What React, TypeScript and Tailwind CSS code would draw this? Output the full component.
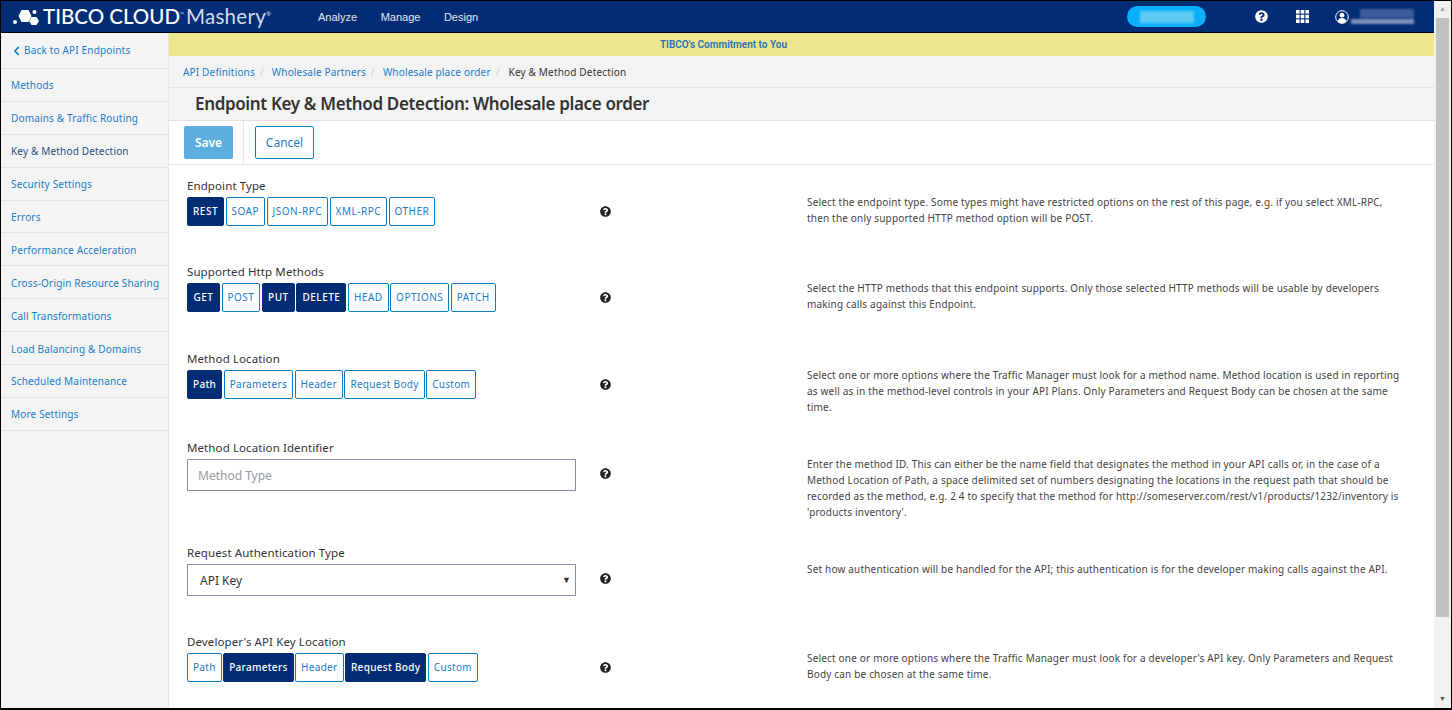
import { FaChevronLeft, FaQuestionCircle } from 'react-icons/fa';

const sideLinks = [
  'Methods',
  'Domains & Traffic Routing',
  'Key & Method Detection',
  'Security Settings',
  'Errors',
  'Performance Acceleration',
  'Cross-Origin Resource Sharing',
  'Call Transformations',
  'Load Balancing & Domains',
  'Scheduled Maintenance',
  'More Settings',
];

type Opt = { label: string; on?: boolean };

function Toggle({ options, caps }: { options: Opt[]; caps?: boolean }) {
  return (
    <div className="flex gap-[1.5px]">
      {options.map((o) => (
        <button
          key={o.label}
          className={`h-[29px] px-[5px] rounded-[2px] border text-[10px] ${caps ? 'min-w-[33px] tracking-[0.5px]' : 'tracking-[0.3px]'} ${
            o.on
              ? 'bg-[#022d75] border-[#022d75] text-white font-medium'
              : 'bg-white border-[#0a7ec2] text-[#1a7cc9]'
          }`}
        >
          {o.label}
        </button>
      ))}
    </div>
  );
}

function Row({
  label,
  help,
  height,
  children,
}: {
  label: string;
  help: React.ReactNode;
  height: string;
  children: React.ReactNode;
}) {
  return (
    <div className={`flex ${height}`}>
      <div className="w-[389px] shrink-0">
        <div className="text-[11.5px] leading-[16px] tracking-[0.1px] text-[#333] mb-[3px]">{label}</div>
        {children}
      </div>
      <div className="w-[231px] shrink-0 pl-[24px] pt-[28px]">
        <FaQuestionCircle className="w-[11px] h-[11px] text-[#222]" />
      </div>
      <div className="w-[604px] shrink-0 pt-[16px] text-[10px] leading-[16px] tracking-[0.18px] text-[#444] whitespace-nowrap">{help}</div>
    </div>
  );
}

export default function App() {
  return (
    <div className="h-screen overflow-hidden bg-black pt-px pl-px pr-px pb-[2px] flex font-['Noto_Sans','Open_Sans',sans-serif]">
      <div className="flex-1 min-w-0 flex flex-col">
        {/* Top bar */}
        <header className="h-[31px] shrink-0 bg-[#022d75] flex items-center text-white">
          <div className="flex items-center w-[317px] pl-[12px]">
            <svg width="26" height="16" viewBox="0 0 26 16" className="shrink-0">
              <circle cx="2" cy="13" r="2" fill="#fff" />
              <polygon points="8.500,1 15.500,1 18.500,7 15.500,13 8.500,13 5.500,7" fill="#fff" />
              <polygon points="18.500,8 23.500,8 26,12 23.500,16 18.500,16 16,12" fill="#fff" />
              <circle cx="21.500" cy="3" r="2" fill="#fff" />
            </svg>
            <span className="ml-[4px] text-[20.5px] leading-none font-medium font-['Lato',sans-serif]">TIBCO CLOUD</span>
            <span className="self-start mt-[6px] text-[5px] leading-none text-[#d5dbe8]">™</span>
            <span className="ml-[2px] text-[20.5px] leading-none tracking-[0.3px] text-[#d5dbe8] font-['Lato',sans-serif]">Mashery</span>
            <span className="self-start mt-[5px] text-[6px] leading-none text-[#d5dbe8]">®</span>
          </div>
          <nav className="flex gap-[23.5px] pt-[2px] text-[11px] font-medium text-[#e3e8f1] font-['Liberation_Sans',sans-serif]">
            <span>Analyze</span>
            <span>Manage</span>
            <span>Design</span>
          </nav>
          <div className="ml-auto flex items-center">
            <div className="w-[79px] h-[21px] rounded-full bg-[#0ab0fb] flex items-center justify-center mr-[49px]">
              <div className="w-[54px] h-[12px] bg-[#5fc9f5] blur-[1px]" />
            </div>
            <FaQuestionCircle className="w-[13px] h-[13px] text-white mr-[28px]" />
            <svg width="13" height="13" viewBox="0 0 13 13" className="mr-[26px]" fill="#fff">
              <rect x="0" y="0" width="3.600" height="3.600" />
              <rect x="4.700" y="0" width="3.600" height="3.600" />
              <rect x="9.400" y="0" width="3.600" height="3.600" />
              <rect x="0" y="4.700" width="3.600" height="3.600" />
              <rect x="4.700" y="4.700" width="3.600" height="3.600" />
              <rect x="9.400" y="4.700" width="3.600" height="3.600" />
              <rect x="0" y="9.400" width="3.600" height="3.600" />
              <rect x="4.700" y="9.400" width="3.600" height="3.600" />
              <rect x="9.400" y="9.400" width="3.600" height="3.600" />
            </svg>
            <svg width="14" height="14" viewBox="0 0 14 14" className="mr-[2px]">
              <circle cx="7" cy="7" r="6.300" fill="none" stroke="#fff" strokeWidth="1" />
              <circle cx="7" cy="5.200" r="2.400" fill="#fff" />
              <path d="M2.800 11.500c.5-2.400 2-3.400 4.200-3.400s3.700 1 4.200 3.400c-1 1.200-2.500 1.900-4.200 1.900s-3.200-.7-4.200-1.900z" fill="#fff" />
            </svg>
            <div className="w-[63px] flex flex-col gap-[1px] mr-[20px] blur-[1px]">
              <div className="h-[9px] w-[54px] ml-[9px] bg-[#3a5c9a]" />
              <div className="h-[5px] bg-[#7f92bb]" />
            </div>
          </div>
        </header>

        <div className="flex-1 min-h-0 mt-px flex">
          {/* Sidebar */}
          <aside className="w-[168px] shrink-0 bg-[#f4f4f4] border-r border-[#e6e6e6]">
            <a className="h-[36px] flex items-center pl-[11px] gap-[3px] border-b border-[#e2e2e2] text-[10px] tracking-[0.17px] text-[#1a7cc9]">
              <FaChevronLeft className="w-[9px] h-[10px] text-[#0a7ec2]" />
              Back to API Endpoints
            </a>
            {sideLinks.map((l) => (
              <a
                key={l}
                className={`h-[32.900px] pt-[2px] flex items-center pl-[10px] border-b border-[#e2e2e2] text-[10px] tracking-[0.17px] whitespace-nowrap ${
                  l === 'Key & Method Detection' ? 'text-[#22507e]' : 'text-[#1a7cc9]'
                }`}
              >
                {l}
              </a>
            ))}
          </aside>

          {/* Main */}
          <main className="flex-1 min-w-0 bg-white flex flex-col">
            <div className="h-[23px] shrink-0 bg-[#eee68c] pr-[156px] flex items-center justify-center text-[10px] font-semibold text-[#1f73b7] font-['Roboto',sans-serif]">
              TIBCO's Commitment to You
            </div>
            <div className="h-[32px] shrink-0 pt-[1px] bg-[#f3f3f3] border-b border-[#e2e2e2] flex items-center pl-[14px] text-[10px] tracking-[0.17px] text-[#1a7cc9] whitespace-nowrap">
              <a>API Definitions</a>
              <span className="mx-[5px] text-[#ccc]">/</span>
              <a className="ml-[3px]">Wholesale Partners</a>
              <span className="mx-[5px] text-[#ccc]">/</span>
              <a className="ml-[3px]">Wholesale place order</a>
              <span className="mx-[5px] text-[#ccc]">/</span>
              <span className="ml-[4px] text-[#333]">Key &amp; Method Detection</span>
            </div>
            <div className="h-[33px] shrink-0 bg-[#f3f3f3] border-b border-[#e2e2e2] flex items-center pl-[26px] text-[17px] font-semibold text-[#333] tracking-[-0.35px]">
              Endpoint Key &amp; Method Detection: Wholesale place order
            </div>
            <div className="h-[44px] shrink-0 border-b border-[#e6e6e6] flex items-center pl-[15px]">
              <button className="w-[49px] h-[33px] rounded-[2px] bg-[#5baedd] text-white text-[12px] font-semibold">Save</button>
              <div className="w-px h-full bg-[#e6e6e6] ml-[10px] mr-[11px]" />
              <button className="w-[59px] h-[33px] rounded-[2px] border border-[#0a7ec2] text-[#1a7cc9] text-[12px]">Cancel</button>
            </div>

            <div className="flex-1 min-h-0 overflow-hidden pl-[18px] pt-[13px]">
              <Row
                label="Endpoint Type"
                height="h-[86px]"
                help={
                  <>
                    Select the endpoint type. Some types might have restricted options on the rest of this page, e.g. if you select XML-RPC,
                    <br />
                    then the only supported HTTP method option will be POST.
                  </>
                }
              >
                <Toggle
                  caps
                  options={[{ label: 'REST', on: true }, { label: 'SOAP' }, { label: 'JSON-RPC' }, { label: 'XML-RPC' }, { label: 'OTHER' }]}
                />
              </Row>
              <Row
                label="Supported Http Methods"
                height="h-[87px]"
                help={
                  <>
                    Select the HTTP methods that this endpoint supports. Only those selected HTTP methods will be usable by developers
                    <br />
                    making calls against this Endpoint.
                  </>
                }
              >
                <Toggle
                  caps
                  options={[
                    { label: 'GET', on: true },
                    { label: 'POST' },
                    { label: 'PUT', on: true },
                    { label: 'DELETE', on: true },
                    { label: 'HEAD' },
                    { label: 'OPTIONS' },
                    { label: 'PATCH' },
                  ]}
                />
              </Row>
              <Row
                label="Method Location"
                height="h-[89px]"
                help={
                  <>
                    Select one or more options where the Traffic Manager must look for a method name. Method location is used in reporting
                    <br />
                    as well as in the method-level controls in your API Plans. Only Parameters and Request Body can be chosen at the same
                    <br />
                    time.
                  </>
                }
              >
                <Toggle
                  options={[{ label: 'Path', on: true }, { label: 'Parameters' }, { label: 'Header' }, { label: 'Request Body' }, { label: 'Custom' }]}
                />
              </Row>
              <Row
                label="Method Location Identifier"
                height="h-[105px]"
                help={
                  <>
                    Enter the method ID. This can either be the name field that designates the method in your API calls or, in the case of a
                    <br />
                    Method Location of Path, a space delimited set of numbers designating the locations in the request path that should be
                    <br />
                    recorded as the method, e.g. 2 4 to specify that the method for http://someserver.com/rest/v1/products/1232/inventory is
                    <br />
                    'products inventory'.
                  </>
                }
              >
                <input
                  placeholder="Method Type"
                  className="w-[389px] h-[32px] border border-[#8391ad] px-[10px] text-[12px] placeholder:text-[#9a9aa5] outline-none"
                />
              </Row>
              <Row
                label="Request Authentication Type"
                height="h-[89px]"
                help="Set how authentication will be handled for the API; this authentication is for the developer making calls against the API."
              >
                <div className="relative w-[389px] mt-[1px]">
                  <select className="w-full h-[32px] border border-[#8391ad] pl-[12px] pt-[1px] text-[12px] text-[#333] bg-white appearance-none outline-none">
                    <option>API Key</option>
                  </select>
                  <span className="absolute right-[5px] top-[9px] text-[9px] text-[#333]">▼</span>
                </div>
              </Row>
              <Row
                label="Developer's API Key Location"
                height="h-[86px]"
                help={
                  <>
                    Select one or more options where the Traffic Manager must look for a developer's API key. Only Parameters and Request
                    <br />
                    Body can be chosen at the same time.
                  </>
                }
              >
                <Toggle
                  options={[{ label: 'Path' }, { label: 'Parameters', on: true }, { label: 'Header' }, { label: 'Request Body', on: true }, { label: 'Custom' }]}
                />
              </Row>
            </div>
          </main>
        </div>
      </div>

      {/* Scrollbar */}
      <div className="w-[17px] shrink-0 bg-[#f1f1f1] flex flex-col items-center">
        <div className="h-[17px] flex items-center justify-center text-[7px] text-[#a3a3a3]">▲</div>
        <div className="w-[13px] flex-1 bg-[#c1c1c1] mb-[74px]" />
        <div className="h-[17px] flex items-center justify-center text-[7px] text-[#505050]">▼</div>
      </div>
    </div>
  );
}
